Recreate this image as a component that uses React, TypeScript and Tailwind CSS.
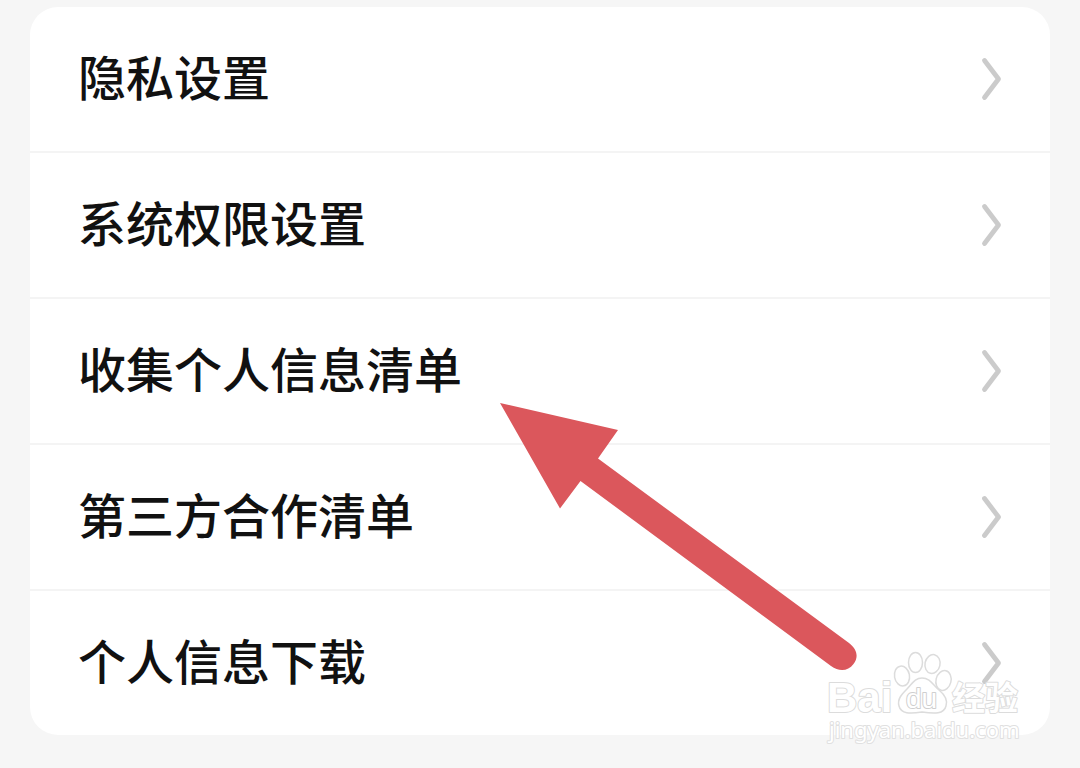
const ITEMS = [
  { id: "privacy", label: "隐私设置" },
  { id: "permissions", label: "系统权限设置" },
  { id: "collected", label: "收集个人信息清单" },
  { id: "third-party", label: "第三方合作清单" },
  { id: "download", label: "个人信息下载" },
];

function Chevron() {
  return (
    <svg className="h-11 w-6 shrink-0" viewBox="0 0 24 44" fill="none" aria-hidden="true">
      <path d="M4.500 3.500 L18.500 22 L4.500 40.500" stroke="#cbcbcb" strokeWidth="4.800" strokeLinecap="round" strokeLinejoin="round" />
    </svg>
  );
}

function Arrow() {
  return (
    <svg
      className="pointer-events-none absolute top-[403px] left-[500px] h-[268px] w-[358px]"
      viewBox="0 0 358 268"
      aria-hidden="true"
    >
      <path
        d="M0 0 L118 27 L98 55.500 L349 240 C357 246 359 254 353.500 261 C348 268.500 339 269 331 263 L80.500 78 L60 105.500 Z"
        fill="#db575c"
      />
    </svg>
  );
}

function Watermark() {
  return (
    <svg
      className="pointer-events-none absolute right-0 -bottom-3 mr-[22px] h-[100px] w-[204px]"
      viewBox="0 0 204 100"
      role="img"
      aria-label="Baidu 经验"
    >
      <g fill="#ffffff" stroke="#dcdcdc" strokeWidth="1.500" strokeLinejoin="round">
        <ellipse cx="78" cy="29" rx="7.500" ry="10" transform="rotate(-10 78 29)" />
        <ellipse cx="91.500" cy="15.500" rx="7" ry="10" />
        <ellipse cx="108.500" cy="17" rx="7.500" ry="9.500" transform="rotate(12 108.500 17)" />
        <ellipse cx="119.500" cy="33.500" rx="7.500" ry="10" transform="rotate(14 119.500 33.500)" />
        <path d="M98 31 C106 31 109 38 115 43 C121 48 124 53 122 59 C120 67 111 67 98 65 C86 67 77 67 75 59 C73 52 78 47 83 42 C88 37 91 31 98 31 Z" />
      </g>
      <g className="[paint-order:stroke]" fill="#ffffff" stroke="#dcdcdc" strokeWidth="2" strokeLinejoin="round">
        <text x="3" y="65" className="font-['Liberation_Sans',sans-serif] text-[42px] font-bold">
          Bai
        </text>
        <text x="82" y="61" stroke="#cfcfcf" className="font-['Liberation_Sans',sans-serif] text-[28px]">
          du
        </text>
        <text x="128" y="63" className="font-['Noto_Sans_CJK_SC',sans-serif] text-[33px] font-bold">
          经验
        </text>
        <text x="5" y="91" stroke="#e0e0e0" className="font-['Noto_Sans',sans-serif] text-[22px]">
          jingyan.baidu.com
        </text>
      </g>
    </svg>
  );
}

export default function App() {
  return (
    <main className="relative min-h-screen bg-[#f6f6f6] px-[30px] pt-[7px] pb-8 font-['Noto_Sans_CJK_SC',sans-serif]">
      <nav className="relative rounded-[28px] bg-white">
        <ul className="divide-y-2 divide-[#f4f4f4]">
          {ITEMS.map((item) => (
            <li key={item.id} className="h-[146px] last:h-[144px]">
              <a
                href={`#${item.id}`}
                className="flex h-full items-center justify-between pr-[46px] pl-12 text-5xl font-medium text-[#111111]"
              >
                <span className="pb-2">{item.label}</span>
                <Chevron />
              </a>
            </li>
          ))}
        </ul>
        <Watermark />
      </nav>
      <Arrow />
    </main>
  );
}
